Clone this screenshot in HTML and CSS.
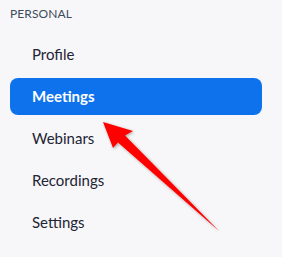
FILE: index.html
```html
<!DOCTYPE html>
<html lang="en">
<head>
  <meta charset="UTF-8">
  <title>Personal</title>
  <link rel="stylesheet" href="styles.css">
</head>
<body>
  <aside class="sidebar">
    <div class="group-title">PERSONAL</div>
    <ul class="menu">
      <li class="menu-item">Profile</li>
      <li class="menu-item active">Meetings</li>
      <li class="menu-item">Webinars</li>
      <li class="menu-item">Recordings</li>
      <li class="menu-item">Settings</li>
    </ul>
  </aside>

  <svg class="pointer" width="282" height="257" viewBox="0 0 282 257">
    <defs>
      <filter id="shade" x="-20%" y="-20%" width="140%" height="140%">
        <feDropShadow dx="1" dy="1" stdDeviation="1.8" flood-color="#000" flood-opacity="0.35"/>
      </filter>
    </defs>
    <polygon points="103,122 133,131 125,135.5 219,231 118,142.5 113,148" fill="#ff0000" filter="url(#shade)"/>
  </svg>
</body>
</html>
```

FILE: styles.css
```css
body {
  margin: 0;
  background: #f7f7f9;
  font-family: "Lato", "Liberation Sans", sans-serif;
  width: 282px;
  height: 257px;
  overflow: hidden;
}
.sidebar {
  padding: 5px 20px 0 10px;
}
.group-title {
  font-size: 12px;
  line-height: 17px;
  color: #3d4b5c;
  letter-spacing: 0.1px;
}
.menu {
  list-style: none;
  margin: 14px 0 0;
  padding: 0;
  display: flex;
  flex-direction: column;
  gap: 5px;
}
.menu-item {
  height: 37px;
  line-height: 37px;
  padding-left: 22px;
  font-size: 15px;
  color: #232333;
  border-radius: 8px;
}
.menu-item.active {
  background: #0e72ed;
  color: #ffffff;
  font-weight: bold;
}
.pointer {
  position: absolute;
  left: 0;
  top: 0;
}
```
